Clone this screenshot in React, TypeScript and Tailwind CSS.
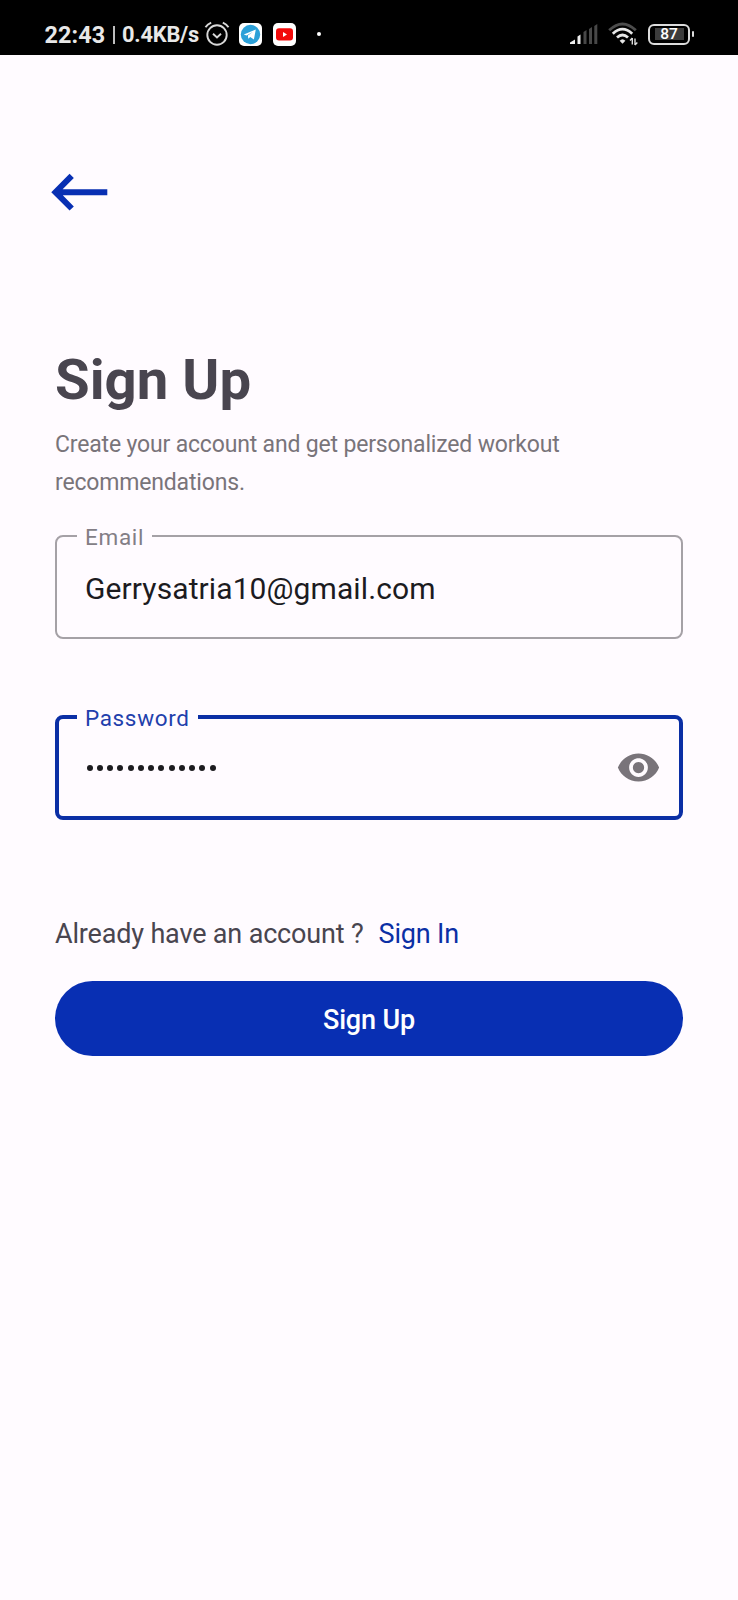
import type { ReactNode } from "react";

function StatusBar() {
  return (
    <header className="flex h-[55px] items-center justify-between bg-black pl-[44.5px] pr-[44px] pt-[13px] text-[#e8e8e8]">
      <div className="flex h-[42px] items-center">
        <span className="w-[62px] whitespace-nowrap pt-[2px] text-[23.4px] leading-[40px] font-bold tracking-[0.1px]">22:43</span>
        <span className="ml-[6px] mt-px h-[18px] w-[2px] bg-[#bdbdbd]" />
        <span className="ml-[7.5px] w-[78px] whitespace-nowrap pt-[2px] text-[21.8px] leading-[40px] font-bold tracking-[-0.2px]">0.4KB/s</span>
        <svg className="ml-[4px] h-[26px] w-[26px]" viewBox="0 0 26 26" fill="none" stroke="#d8d8d8" strokeWidth="1.9">
          <circle cx="13" cy="14" r="9.7" />
          <path d="M1.5 6.3Q3.6 3.2 7.2 1.6M24.5 6.3Q22.4 3.2 18.8 1.6M9 12.7l4 3.7 4-3.7" />
        </svg>
        <svg className="ml-[9px] h-[23px] w-[23px]" viewBox="0 0 23 23">
          <rect width="23" height="23" rx="5" fill="#fff" />
          <circle cx="11.5" cy="11.5" r="9.7" fill="#2ba0d8" />
          <path d="M4.8 11.4 16.8 6.5 14.9 16.6 11.2 14 9.3 15.8 8.9 12.6 14 8.8 7.6 12.4Z" fill="#fff" />
        </svg>
        <svg className="ml-[11px] h-[23px] w-[23px]" viewBox="0 0 23 23">
          <rect width="23" height="23" rx="5" fill="#fff" />
          <rect x="3" y="5.2" width="17" height="12.4" rx="3" fill="#f20a0a" />
          <path d="M10 8.9v5l4-2.5z" fill="#fff" />
        </svg>
        <span className="ml-[21px] h-1 w-1 rounded-full bg-white" />
      </div>
      <div className="flex h-[42px] items-center">
        <svg className="h-[20px] w-[28px]" viewBox="0 0 28 20">
          <path d="M0 20v-1.5l5-3V20zM7.5 20v-7.5l3-2V20z" fill="#eee" />
          <path d="M13.5 20V8l3-2v14zM19 20V5l3-2v17zM24.3 20V2l3-2v20z" fill="#484848" />
        </svg>
        <svg className="ml-[10px] h-[24px] w-[30px]" viewBox="0 0 30 24" fill="none" strokeWidth="2.8">
          <path d="M1.2 8.3Q14.5-4.5 27.8 8.3" stroke="#4c4c4c" />
          <path d="M4.8 11.7Q14.5 2.5 24.2 11.7M9 15.5Q14.5 10.5 20 15.5" stroke="#e6e6e6" />
          <path d="M11.6 18.8Q14.5 15.6 17.4 18.8L14.5 21.8Z" fill="#e6e6e6" />
          <path d="M24.3 16v6.5M27 16.5v6.5M22 18.5l2.3-2.5M29.3 20.5 27 23" stroke="#ddd" strokeWidth="1.4" />
        </svg>
        <div className="ml-[10px] flex h-[21px] w-[42px] items-center justify-center rounded-[6px] border-[2.5px] border-[#dcdcdc]">
          <span className="flex h-[12px] w-[29px] items-center justify-center bg-[#3c3c3c] pt-px text-[15.5px] font-medium text-white">87</span>
        </div>
        <span className="ml-[2px] h-[6px] w-[2px] rounded-sm bg-[#dcdcdc]" />
      </div>
    </header>
  );
}

function OutlinedField({ label, className, legendClass, children }: { label: string; className: string; legendClass: string; children: ReactNode }) {
  return (
    <fieldset className={`w-full rounded-[8px] ${className}`}>
      <legend className={`h-7 px-2 text-[22.5px] leading-7 ${legendClass}`}>
        <span className="relative top-[1px]">{label}</span>
      </legend>
      {children}
    </fieldset>
  );
}

export default function App() {
  return (
    <div className="flex h-[1600px] w-[738px] flex-col bg-[#fffbff] font-[Roboto,sans-serif]">
      <StatusBar />
      <main className="flex flex-col px-[55px]">
        <button aria-label="Back" className="mt-[118px] -ml-[4px] h-[39px] w-[56px]">
          <svg className="h-[39px] w-[57px]" viewBox="0 0 57 39" fill="none" stroke="#082fb3" strokeWidth="6">
            <path d="M56.3 19.2H5M20.7 2.9 4.5 19.2l16.2 16.3" />
          </svg>
        </button>
        <h1 className="mt-[135px] h-[66px] text-[56.3px] leading-[66px] font-bold text-[#49454f]">Sign Up</h1>
        <p className="mt-[13px] text-[23px] leading-[38px] tracking-[-0.17px] text-[#79747a]">
          Create your account and get personalized workout
          <br />
          recommendations.
        </p>
        <OutlinedField label="Email" className="mt-[20px] h-[117px] border-2 border-[#a5a1a6] pl-[20px]" legendClass="tracking-[0.7px] text-[#837e86]">
          <div className="pl-[8px] pt-[21px] text-[30px] leading-[36px] tracking-[0.1px] text-[#1c1b1f]">Gerrysatria10@gmail.com</div>
        </OutlinedField>
        <OutlinedField label="Password" className="mt-[64px] h-[117px] border-4 border-[#0b2fa5] pl-[18px] pr-[18px]" legendClass="tracking-[0.65px] text-[#1f3fac]">
          <div className="flex w-full items-center justify-between pt-[14px]">
            <div className="ml-[9.6px] mt-px flex gap-[4.25px]">
              {Array.from({ length: 13 }, (_, i) => (
                <span key={i} className="h-[6px] w-[6px] rounded-full bg-[#1c1b1f]" />
              ))}
            </div>
            <svg className="h-[45px] w-[45px]" viewBox="0 0 24 24" fill="#79747a">
              <path d="M12 4.5C7 4.5 2.73 7.61 1 12c1.73 4.39 6 7.5 11 7.5s9.27-3.11 11-7.5c-1.73-4.39-6-7.5-11-7.5M12 17c-2.76 0-5-2.24-5-5s2.24-5 5-5 5 2.24 5 5-2.24 5-5 5m0-8c-1.66 0-3 1.34-3 3s1.34 3 3 3 3-1.34 3-3-1.34-3-3-3" />
            </svg>
          </div>
        </OutlinedField>
        <div className="mt-[96px] flex h-[36px] gap-[15px] text-[27px] leading-[36px] tracking-[-0.17px] text-[#49454f]">
          <span className="whitespace-nowrap">Already have an account ?</span>
          <a className="whitespace-nowrap text-[#0b2fa5]">Sign In</a>
        </div>
        <button className="mt-[29px] h-[75px] rounded-full bg-[#082fb3] pt-[3px] text-[27px] font-medium tracking-[-0.14px] text-white">Sign Up</button>
      </main>
    </div>
  );
}
